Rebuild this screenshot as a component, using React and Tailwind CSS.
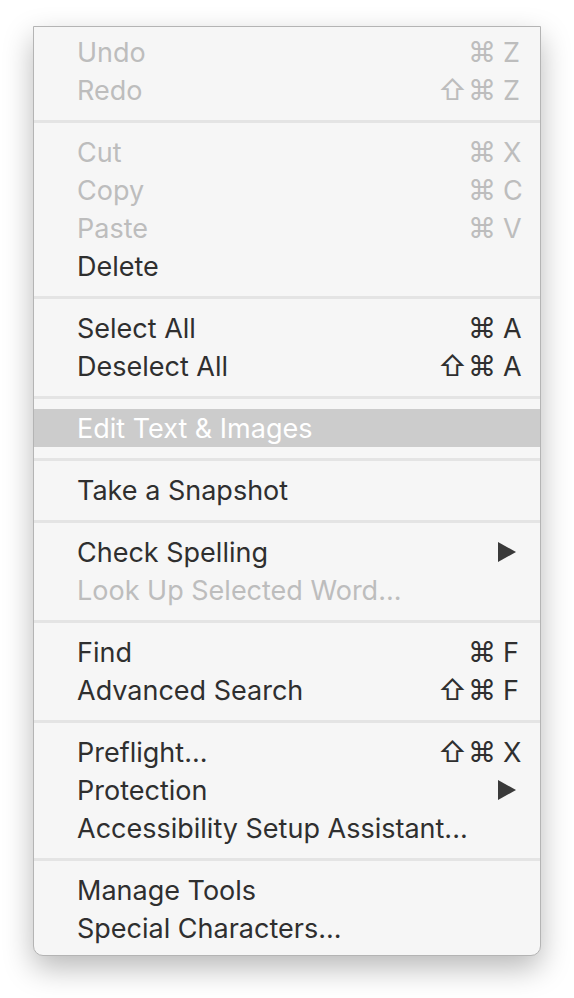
import React from "react";

const groups = [
  [
    { label: "Undo", mods: "⌘", key: "Z", disabled: true },
    { label: "Redo", mods: "⇧⌘", key: "Z", disabled: true },
  ],
  [
    { label: "Cut", mods: "⌘", key: "X", disabled: true },
    { label: "Copy", mods: "⌘", key: "C", disabled: true },
    { label: "Paste", mods: "⌘", key: "V", disabled: true },
    { label: "Delete" },
  ],
  [
    { label: "Select All", mods: "⌘", key: "A" },
    { label: "Deselect All", mods: "⇧⌘", key: "A" },
  ],
  [{ label: "Edit Text & Images", highlighted: true }],
  [{ label: "Take a Snapshot" }],
  [
    { label: "Check Spelling", submenu: true },
    { label: "Look Up Selected Word...", disabled: true },
  ],
  [
    { label: "Find", mods: "⌘", key: "F" },
    { label: "Advanced Search", mods: "⇧⌘", key: "F" },
  ],
  [
    { label: "Preflight...", mods: "⇧⌘", key: "X" },
    { label: "Protection", submenu: true },
    { label: "Accessibility Setup Assistant..." },
  ],
  [{ label: "Manage Tools" }, { label: "Special Characters..." }],
];

const MenuItem = ({ item }) => {
  const color = item.highlighted
    ? "text-white bg-[#cccccc]"
    : item.disabled
    ? "text-[#bdbdbd]"
    : "text-[#2f2f2f]";

  return (
    <div className={`flex items-center h-[38px] pl-[43px] pr-[18px] ${color}`}>
      <span className="flex-1 whitespace-nowrap">{item.label}</span>
      {item.key && (
        <span className="flex items-center">
          <span className="flex items-center mr-[7px] text-[28px]">
            {item.mods.split("").map((m, i) => (
              <span key={i} className={m === "⇧" ? "mr-[1px]" : ""}>
                {m}
              </span>
            ))}
          </span>
          <span className="w-[19px]">{item.key}</span>
        </span>
      )}
      {item.submenu && (
        <svg width="18" height="20" viewBox="0 0 18 20" className="mr-[6px]">
          <polygon points="0,0 18,10 0,20" fill="#3a3a3a" />
        </svg>
      )}
    </div>
  );
};

export default function App() {
  return (
    <div className="min-h-screen bg-white pt-[26px] pl-[33px]">
      <div
        className="w-[508px] bg-[#f6f6f6] border border-[#b4b4b4] rounded-b-[10px] pt-[6px] pb-[8px] shadow-[0_12px_30px_rgba(0,0,0,0.28)] text-[27px] leading-none"
        style={{ fontFamily: "Inter, 'DejaVu Sans', sans-serif" }}
      >
        {groups.map((group, gi) => (
          <div key={gi}>
            {gi > 0 && (
              <div className="pt-[11px] pb-[10px]">
                <div className="h-[3px] bg-[#e4e4e4]" />
              </div>
            )}
            {group.map((item) => (
              <MenuItem key={item.label} item={item} />
            ))}
          </div>
        ))}
      </div>
    </div>
  );
}
